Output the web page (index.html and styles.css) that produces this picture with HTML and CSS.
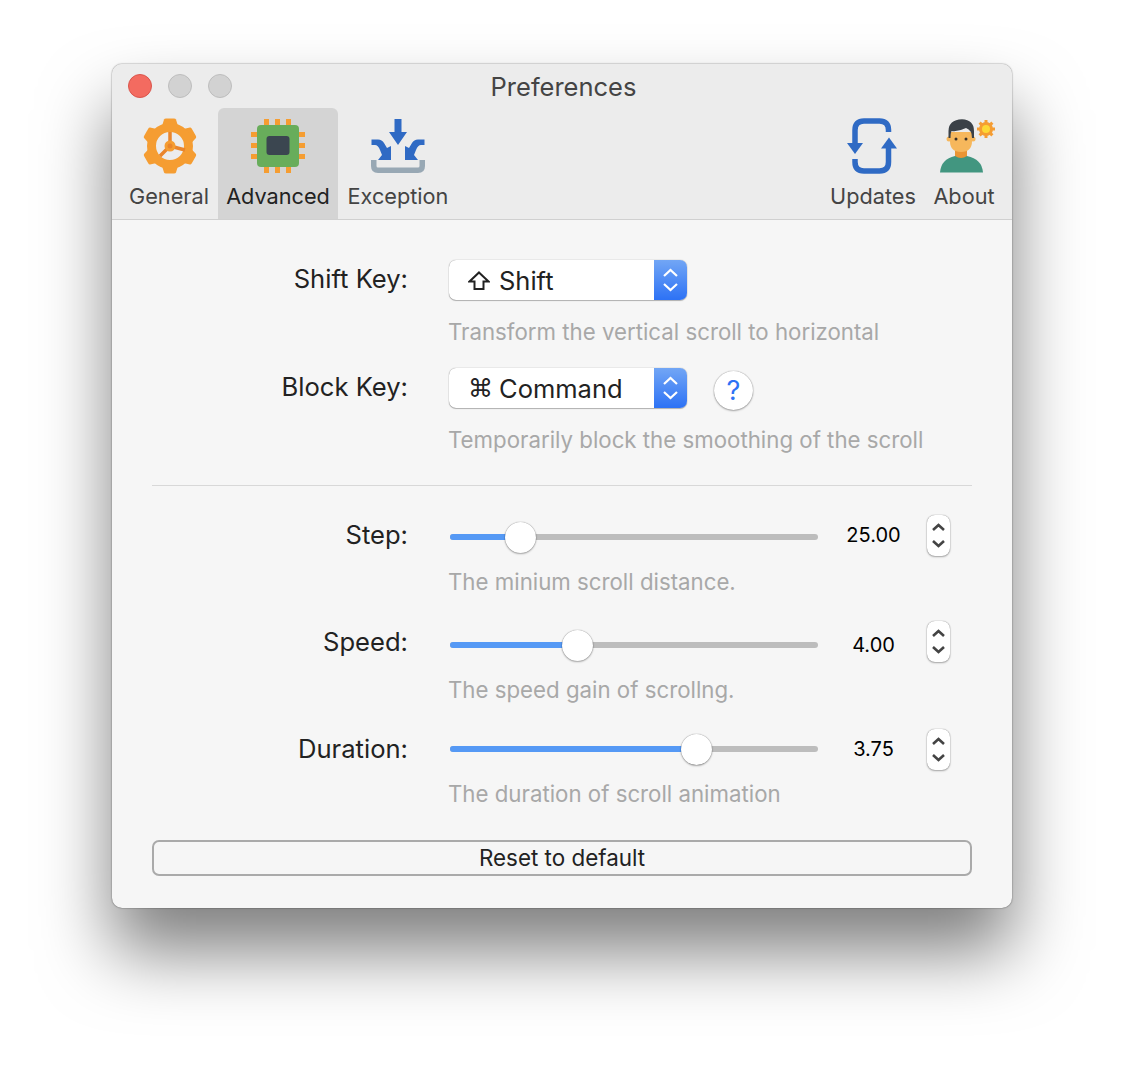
FILE: index.html
```html
<!DOCTYPE html>
<html lang="en">
<head>
    <meta charset="UTF-8">
    <title>Preferences</title>
    <link rel="stylesheet" href="styles.css">
</head>
<body>
    <div class="window">
        <div class="titlebar">
            <div class="lights">
                <span class="light close"></span>
                <span class="light"></span>
                <span class="light"></span>
            </div>
            <div class="title">Preferences</div>
        </div>

        <div class="toolbar">
            <div class="tab tab-general">
                <svg class="icon" viewBox="0 0 56 56">
                    <g transform="translate(1 0)">
                        <g fill="#f59d32">
                            <path d="M20 8L22 1.500Q22.500 0.500 24 0.500H32Q33.500 0.500 34 1.500L36 8Z"/>
                            <path d="M20 8L22 1.500Q22.500 0.500 24 0.500H32Q33.500 0.500 34 1.500L36 8Z" transform="rotate(60 28 28)"/>
                            <path d="M20 8L22 1.500Q22.500 0.500 24 0.500H32Q33.500 0.500 34 1.500L36 8Z" transform="rotate(120 28 28)"/>
                            <path d="M20 8L22 1.500Q22.500 0.500 24 0.500H32Q33.500 0.500 34 1.500L36 8Z" transform="rotate(180 28 28)"/>
                            <path d="M20 8L22 1.500Q22.500 0.500 24 0.500H32Q33.500 0.500 34 1.500L36 8Z" transform="rotate(240 28 28)"/>
                            <path d="M20 8L22 1.500Q22.500 0.500 24 0.500H32Q33.500 0.500 34 1.500L36 8Z" transform="rotate(300 28 28)"/>
                        </g>
                        <circle cx="28" cy="28" r="18.500" fill="none" stroke="#f59d32" stroke-width="9"/>
                        <path d="M28 14V28M28 28L43 32M28 28L18 38" stroke="#e9852c" stroke-width="3.500" fill="none"/>
                        <circle cx="28" cy="28" r="5.500" fill="#f59d32"/>
                        <circle cx="28" cy="28" r="2.500" fill="#e9852c"/>
                    </g>
                </svg>
                <span class="tab-label">General</span>
            </div>
            <div class="tab tab-wide active">
                <svg class="icon" viewBox="0 0 56 56">
                    <g fill="#f59d32">
                        <rect x="14" y="1" width="5" height="6"/><rect x="25" y="1" width="5" height="6"/><rect x="36" y="1" width="5" height="6"/>
                        <rect x="14" y="49" width="5" height="6"/><rect x="25" y="49" width="5" height="6"/><rect x="36" y="49" width="5" height="6"/>
                        <rect x="1" y="14" width="6" height="5"/><rect x="1" y="25" width="6" height="5"/><rect x="1" y="36" width="6" height="5"/>
                        <rect x="49" y="14" width="6" height="5"/><rect x="49" y="25" width="6" height="5"/><rect x="49" y="36" width="6" height="5"/>
                    </g>
                    <rect x="7" y="7" width="42" height="42" rx="4" fill="#68ad5b"/>
                    <rect x="16.500" y="18" width="23" height="19" rx="3" fill="#3b4650"/>
                </svg>
                <span class="tab-label">Advanced</span>
            </div>
            <div class="tab tab-wide">
                <svg class="icon" viewBox="0 0 56 56">
                    <path d="M3.750 42V48Q3.750 52.250 8 52.250H48Q52.250 52.250 52.250 48V42" fill="none" stroke="#98a8b4" stroke-width="5.500"/>
                    <path d="M24.500 1H31.500V14H37L28 27L19 14H24.500Z" fill="#2f6ac4"/>
                    <path d="M1.500 21.500H8Q12 21.500 14 25L17 30L21 28V42H8L12 37L10 32Q8 27 5 27H1.500Z" fill="#2f6ac4"/>
                    <path d="M54.500 21.500H48Q44 21.500 42 25L39 30L35 28V42H48L44 37L46 32Q48 27 51 27H54.500Z" fill="#2f6ac4"/>
                </svg>
                <span class="tab-label">Exception</span>
            </div>
            <div class="toolbar-space"></div>
            <div class="tab tab-updates">
                <svg class="icon" viewBox="0 0 56 56">
                    <path d="M43.500 14V12Q43.500 3 34.500 3H19Q10 3 10 12V28" fill="none" stroke="#2f6ac4" stroke-width="5.500"/>
                    <path d="M10 41V44Q10 53 19 53H34.500Q43.500 53 43.500 44V28" fill="none" stroke="#2f6ac4" stroke-width="5.500"/>
                    <path d="M2 25H18L10 36Z" fill="#2f6ac4"/>
                    <path d="M36 30.500H52L44 19.500Z" fill="#2f6ac4"/>
                </svg>
                <span class="tab-label">Updates</span>
            </div>
            <div class="tab tab-about">
                <svg class="icon" viewBox="0 0 56 56">
                    <path d="M4 54.500Q5 41 19 38H31Q46 41 47 54.500Z" fill="#429680"/>
                    <path d="M19 30H31V38Q25 42 19 38Z" fill="#ea9534"/>
                    <circle cx="13" cy="21" r="2.500" fill="#f6b75c"/>
                    <circle cx="37" cy="21" r="2.500" fill="#f6b75c"/>
                    <path d="M14 14H36V23Q36 34 25 34Q14 34 14 23Z" fill="#f6b75c"/>
                    <path d="M12.500 20V13Q12.500 2 26 1.300Q38 2 38 13V20L36 20Q36 12 30 10Q22 14 15.500 13Q14.500 15 14.500 20Z" fill="#3b4147"/>
                    <circle cx="20" cy="21" r="1.500" fill="#3b3128"/>
                    <circle cx="30" cy="21" r="1.500" fill="#3b3128"/>
                    <g fill="#f59d32">
                        <circle cx="50" cy="11" r="7"/>
                        <rect x="48.500" y="2" width="3" height="18"/>
                        <rect x="41" y="9.500" width="18" height="3"/>
                        <rect x="48.500" y="2" width="3" height="18" transform="rotate(45 50 11)"/>
                        <rect x="41" y="9.500" width="18" height="3" transform="rotate(45 50 11)"/>
                    </g>
                    <circle cx="50" cy="11" r="4" fill="#fdd835"/>
                </svg>
                <span class="tab-label">About</span>
            </div>
        </div>

        <div class="content">
            <div class="row">
                <label class="row-label">Shift Key:</label>
                <div class="select">
                    <span class="select-value">
                        <svg class="shift-glyph" viewBox="0 0 22 19"><path d="M11 1.500L20.500 10.500H15.500V18H6.500V10.500H1.500Z" fill="none" stroke="#222" stroke-width="2"/></svg>Shift
                    </span>
                    <span class="select-arrows">
                        <svg viewBox="0 0 33 40"><path d="M10 16L16.500 10L23 16M10 24L16.500 30L23 24" fill="none" stroke="#fff" stroke-width="2.200"/></svg>
                    </span>
                </div>
            </div>
            <p class="hint">Transform the vertical scroll to horizontal</p>

            <div class="row row-block">
                <label class="row-label">Block Key:</label>
                <div class="select">
                    <span class="select-value"><span class="key-glyph">⌘</span>Command</span>
                    <span class="select-arrows">
                        <svg viewBox="0 0 33 40"><path d="M10 16L16.500 10L23 16M10 24L16.500 30L23 24" fill="none" stroke="#fff" stroke-width="2.200"/></svg>
                    </span>
                </div>
                <div class="help">?</div>
            </div>
            <p class="hint">Temporarily block the smoothing of the scroll</p>

            <hr class="divider">

            <div class="row row-step">
                <label class="row-label">Step:</label>
                <div class="slider">
                    <div class="slider-fill" style="width: 71px"></div>
                    <div class="slider-knob" style="left: 55px"></div>
                </div>
                <span class="value">25.00</span>
                <div class="stepper">
                    <svg viewBox="0 0 23 41"><path d="M6 15L11.500 10L17 15M6 26L11.500 31L17 26" fill="none" stroke="#444" stroke-width="2.600"/></svg>
                </div>
            </div>
            <p class="hint hint-slider">The minium scroll distance.</p>

            <div class="row row-speed">
                <label class="row-label">Speed:</label>
                <div class="slider">
                    <div class="slider-fill" style="width: 128px"></div>
                    <div class="slider-knob" style="left: 112px"></div>
                </div>
                <span class="value">4.00</span>
                <div class="stepper">
                    <svg viewBox="0 0 23 41"><path d="M6 15L11.500 10L17 15M6 26L11.500 31L17 26" fill="none" stroke="#444" stroke-width="2.600"/></svg>
                </div>
            </div>
            <p class="hint hint-slider">The speed gain of scrollng.</p>

            <div class="row row-duration">
                <label class="row-label">Duration:</label>
                <div class="slider">
                    <div class="slider-fill" style="width: 247px"></div>
                    <div class="slider-knob" style="left: 231px"></div>
                </div>
                <span class="value">3.75</span>
                <div class="stepper">
                    <svg viewBox="0 0 23 41"><path d="M6 15L11.500 10L17 15M6 26L11.500 31L17 26" fill="none" stroke="#444" stroke-width="2.600"/></svg>
                </div>
            </div>
            <p class="hint hint-slider">The duration of scroll animation</p>

            <button class="reset">Reset to default</button>
        </div>
    </div>
</body>
</html>
```

FILE: styles.css
```css
body {
    margin: 0;
    height: 1068px;
    padding-top: 64px;
    box-sizing: border-box;
    background-color: #fff;
    font-family: Inter, "Open Sans", sans-serif;
    color: #222;
    overflow: hidden;
}
.window {
    width: 900px;
    margin: 0 0 0 112px;
    background: #f6f6f6;
    border-radius: 10px;
    box-shadow: 0 0 1.5px rgba(0,0,0,0.7), 0 44px 70px rgba(0,0,0,0.5);
    overflow: hidden;
}
.titlebar {
    position: relative;
    height: 44px;
    background: #ececec;
}
.lights {
    display: flex;
    gap: 16px;
    padding: 10px 0 0 16px;
}
.light {
    width: 22px;
    height: 22px;
    border-radius: 50%;
    background: #d2d2d2;
    border: 1px solid #bdbdbd;
}
.light.close {
    background: #f36b60;
    border-color: #d9554c;
}
.title {
    position: absolute;
    top: 0;
    left: 3px;
    right: 0;
    text-align: center;
    font-size: 25.500px;
    line-height: 46px;
    color: #444;
}
.toolbar {
    display: flex;
    height: 111px;
    padding: 0 3px 0 8px;
    background: #ececec;
    border-bottom: 1px solid #d0d0d0;
}
.toolbar-space {
    flex: 1;
}
.tab {
    display: flex;
    flex-direction: column;
    align-items: center;
    padding-top: 10px;
    border-radius: 6px 6px 0 0;
}
.tab.active {
    background: #d4d4d4;
}
.tab.active .tab-label {
    color: #222;
}
.tab-general {
    width: 98px;
}
.tab-wide {
    width: 120px;
}
.tab-updates {
    width: 92px;
}
.tab-about {
    width: 90px;
}
.icon {
    width: 56px;
    height: 56px;
    overflow: visible;
}
.tab-label {
    margin-top: 8px;
    font-size: 21.700px;
    line-height: 28px;
    color: #444;
    white-space: nowrap;
}
.content {
    padding: 40px 40px 32px;
}
.row {
    display: flex;
    align-items: center;
    height: 40px;
}
.row-block {
    margin-top: 22px;
}
.row-step {
    margin-top: 31px;
}
.row-speed {
    margin-top: 29px;
}
.row-duration {
    margin-top: 25px;
}
.row-label {
    width: 256px;
    margin-right: 41px;
    margin-bottom: 4px;
    text-align: right;
    font-size: 25.600px;
    color: #222;
}
.row-step .row-label {
    margin-bottom: 6px;
}
.row-step .value {
    margin-bottom: 4px;
}
.row-speed .row-label {
    margin-bottom: 8px;
}
.row-speed .value {
    margin-bottom: 1px;
}
.row-duration .row-label {
    margin-bottom: 2px;
}
.select {
    display: flex;
    width: 238px;
    height: 40px;
    box-sizing: border-box;
    border-radius: 7px;
    background: #fff;
    box-shadow: 0 0 1px rgba(0,0,0,0.5), 0 1px 1px rgba(0,0,0,0.25);
    overflow: hidden;
}
.select-value {
    flex: 1;
    display: flex;
    align-items: center;
    padding: 1px 0 0 19px;
    font-size: 25.500px;
    color: #222;
}
.shift-glyph {
    width: 22px;
    height: 19px;
    margin: 0 9px 0 0;
}
.key-glyph {
    width: 31px;
    font-family: "DejaVu Sans", sans-serif;
    font-size: 25px;
}
.select-arrows {
    width: 33px;
    height: 40px;
    background: linear-gradient(#72a6f5, #2d72f5);
}
.select-arrows svg {
    display: block;
    width: 33px;
    height: 40px;
}
.help {
    width: 39px;
    height: 39px;
    margin: 4px 0 0 27px;
    border-radius: 50%;
    background: #fff;
    box-shadow: 0 0 1px rgba(0,0,0,0.5), 0 1px 2px rgba(0,0,0,0.3);
    color: #2d72f5;
    font-size: 27px;
    line-height: 39px;
    text-align: center;
}
.hint {
    margin: 18px 0 0 296px;
    font-size: 22.250px;
    line-height: 28px;
    color: #a8a8a8;
    white-space: nowrap;
}
.hint-slider {
    margin-top: 11px;
}
.divider {
    height: 1px;
    margin: 31px 0 0;
    border: 0;
    background: #d8d8d8;
}
.slider {
    position: relative;
    width: 368px;
    height: 6px;
    margin-left: 1px;
    border-radius: 3px;
    background: #bdbdbd;
}
.slider-fill {
    height: 6px;
    border-radius: 3px;
    background: #5599f5;
}
.slider-knob {
    position: absolute;
    top: -12.500px;
    width: 31px;
    height: 31px;
    border-radius: 50%;
    background: #fff;
    box-shadow: 0 0 1px rgba(0,0,0,0.5), 0 1px 2px rgba(0,0,0,0.3);
}
.value {
    width: 111px;
    text-align: center;
    font-size: 20px;
    color: #000;
}
.stepper {
    width: 23px;
    height: 41px;
    margin-left: -2px;
    border-radius: 8px;
    background: #fff;
    box-shadow: 0 0 1px rgba(0,0,0,0.5), 0 1px 2px rgba(0,0,0,0.3);
}
.row-step .stepper {
    margin-bottom: 4px;
}
.row-speed .stepper {
    margin-bottom: 8px;
}
.stepper svg {
    display: block;
    width: 23px;
    height: 41px;
}
.reset {
    display: block;
    width: 100%;
    height: 36px;
    margin-top: 32px;
    padding: 0 0 2px;
    border: 2px solid #aaa;
    border-radius: 7px;
    background: #f6f6f6;
    font-family: inherit;
    font-size: 22.400px;
    color: #222;
}
```
